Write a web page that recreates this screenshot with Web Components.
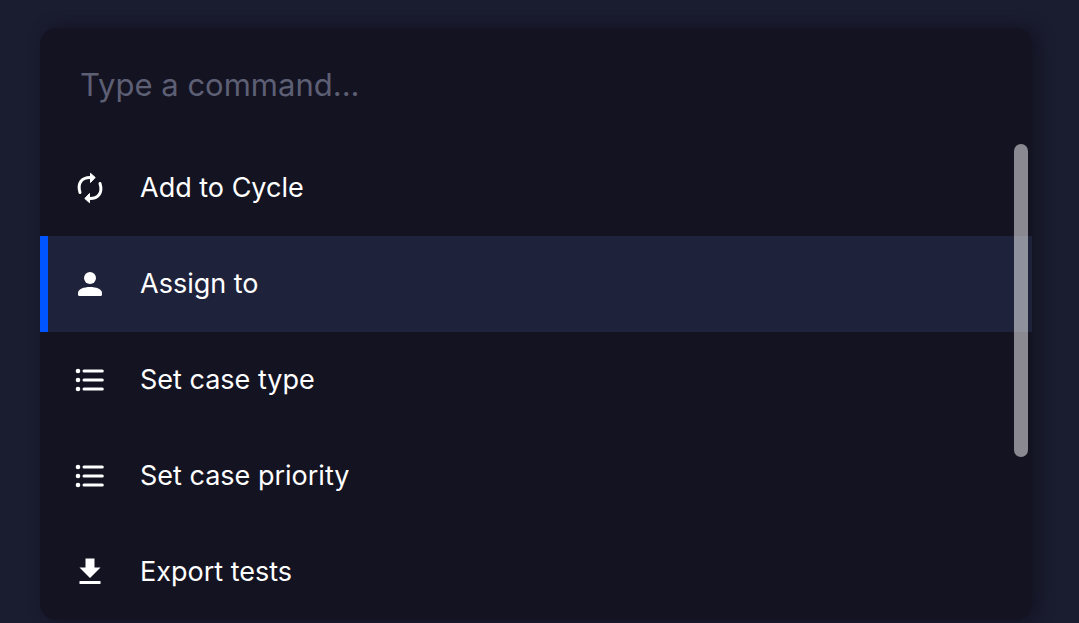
<!DOCTYPE html>
<html lang="en">
<head>
<meta charset="utf-8">
<meta name="viewport" content="width=device-width, initial-scale=1">
<title>Command palette</title>
<style>
  body { margin: 0; background: #1a1c30; color: #fff; font-family: Inter, "Liberation Sans", sans-serif; }
</style>
</head>
<body>
<command-palette>
  <command-item icon="cycle">Add to Cycle</command-item>
  <command-item icon="person" selected>Assign to</command-item>
  <command-item icon="list">Set case type</command-item>
  <command-item icon="list">Set case priority</command-item>
  <command-item icon="download">Export tests</command-item>
</command-palette>

<template id="palette-template">
  <style>
    :host { display: block; padding: 28px 47px 3px 40px; }
    .panel { border-radius: 16px; background: #141322; box-shadow: 6px 0 16px rgba(18, 18, 30, .8); overflow: hidden; }
    input { display: block; box-sizing: border-box; width: 100%; height: 112px; padding: 0 40px; border: 0; outline: 0; background: none; color: #fff; font: 400 31px/40px Inter, "Liberation Sans", sans-serif; }
    input::placeholder { color: #5d5f74; opacity: 1; }
    .results { position: relative; }
    .thumb { position: absolute; top: 4px; right: 4px; width: 14px; height: 313px; border-radius: 7px; background: rgba(255, 255, 255, .5); pointer-events: none; }
  </style>
  <div class="panel">
    <input type="text" aria-label="Command" placeholder="Type a command...">
    <div class="results">
      <slot></slot>
      <div class="thumb"></div>
    </div>
  </div>
</template>

<template id="item-template">
  <style>
    :host { display: block; }
    button { display: flex; align-items: center; gap: 32px; box-sizing: border-box; width: 100%; height: 96px; padding: 0 32px 0 24px; border: 0; border-left: 8px solid transparent; background: none; color: inherit; font: 400 27px/36px Inter, "Liberation Sans", sans-serif; text-align: left; cursor: pointer; }
    :host([selected]) button { border-left-color: #0055ff; background: #1f223b; }
    button > * { flex: none; }
  </style>
  <button type="button"><command-icon></command-icon><span><slot></slot></span></button>
</template>

<script>
  const icons = {
    cycle: '<g fill="none" stroke="#fff" stroke-width="3" stroke-linecap="round"><path d="M8 22.5C5 13 10 7.5 18 7.5M28 13.5C31 23 26 28.5 18 28.5"/></g><path fill="#fff" stroke="#fff" stroke-linejoin="round" d="M18.5 3.3 23.2 7.5 18.5 12.5ZM17.5 23.5 12.8 28.5 17.5 32.7Z"/>',
    person: '<circle cx="18" cy="12" r="6" fill="#fff"/><path fill="#fff" d="M6 27C6 23 12 21 18 21S30 23 30 27V28.5Q30 30 28.5 30H7.5Q6 30 6 28.5Z"/>',
    list: '<g fill="#fff"><circle cx="6" cy="9" r="2.3"/><circle cx="6" cy="18" r="2.3"/><circle cx="6" cy="27" r="2.3"/></g><path fill="none" stroke="#fff" stroke-width="3" stroke-linecap="round" d="M12 9H30.3M12 18H30.3M12 27H30.3"/>',
    download: '<path fill="#fff" d="M13.5 4.5H22.5V13.5H28.5L18 24 7.5 13.5H13.5ZM7.5 27H28.5V30H7.5Z"/>'
  };

  customElements.define('command-icon', class extends HTMLElement {
    static observedAttributes = ['name'];
    constructor() { super(); this.attachShadow({ mode: 'open' }); }
    attributeChangedCallback() {
      this.shadowRoot.innerHTML = `<style>:host{display:block;width:36px;height:36px}svg{display:block}</style><svg width="36" height="36" viewBox="0 0 36 36" aria-hidden="true">${icons[this.getAttribute('name')] || ''}</svg>`;
    }
  });

  customElements.define('command-item', class extends HTMLElement {
    constructor() {
      super();
      this.attachShadow({ mode: 'open' }).append(document.getElementById('item-template').content.cloneNode(true));
    }
    connectedCallback() {
      this.shadowRoot.querySelector('command-icon').setAttribute('name', this.getAttribute('icon'));
      this.shadowRoot.querySelector('button').addEventListener('click', () => {
        for (const item of this.parentElement.children) item.toggleAttribute('selected', item === this);
      });
    }
  });

  customElements.define('command-palette', class extends HTMLElement {
    constructor() {
      super();
      this.attachShadow({ mode: 'open' }).append(document.getElementById('palette-template').content.cloneNode(true));
    }
  });
</script>
</body>
</html>
